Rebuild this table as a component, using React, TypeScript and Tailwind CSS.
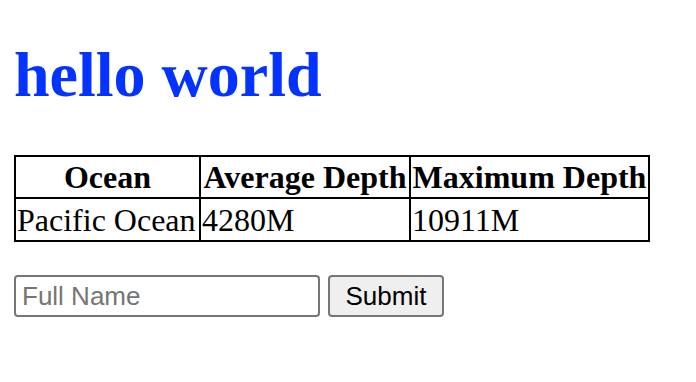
import React from "react";

const oceans = [{ name: "Pacific Ocean", avg: "4280M", max: "10911M" }];

export default function App() {
  return (
    <div className="min-h-[382px] bg-white px-[14px] pt-[43px] text-black">
      <h1 className="font-['Liberation_Serif',serif] text-[64px] font-bold leading-[64px] text-[#0433ff]">
        hello world
      </h1>

      <table className="mt-[48px] w-[636px] border-collapse border-2 border-black font-['Liberation_Serif',serif] text-[32px]">
        <thead>
          <tr className="h-[42px]">
            <th className="w-[185px] border-2 border-black px-0 py-0 text-center font-bold leading-[36px]">
              Ocean
            </th>
            <th className="w-[210px] border-2 border-black px-0 py-0 text-center font-bold leading-[36px]">
              Average Depth
            </th>
            <th className="border-2 border-black px-0 py-0 text-center font-bold leading-[36px]">
              Maximum Depth
            </th>
          </tr>
        </thead>
        <tbody>
          {oceans.map((o) => (
            <tr key={o.name} className="h-[43px]">
              <td className="border-2 border-black px-[1px] py-0 leading-[36px]">{o.name}</td>
              <td className="border-2 border-black px-[1px] py-0 leading-[36px]">{o.avg}</td>
              <td className="border-2 border-black px-[1px] py-0 leading-[36px]">{o.max}</td>
            </tr>
          ))}
        </tbody>
      </table>

      <form className="mt-[33px] flex items-center gap-[8px] font-['Liberation_Sans',Arial,sans-serif] text-[26px]">
        <input
          type="text"
          placeholder="Full Name"
          className="h-[42px] w-[306px] rounded-[4px] border-2 border-[#767676] bg-white px-[6px] text-black placeholder:text-[#757575] outline-none"
        />
        <button
          type="button"
          className="h-[42px] w-[116px] rounded-[4px] border-2 border-[#767676] bg-[#efefef] text-black"
        >
          Submit
        </button>
      </form>
    </div>
  );
}
